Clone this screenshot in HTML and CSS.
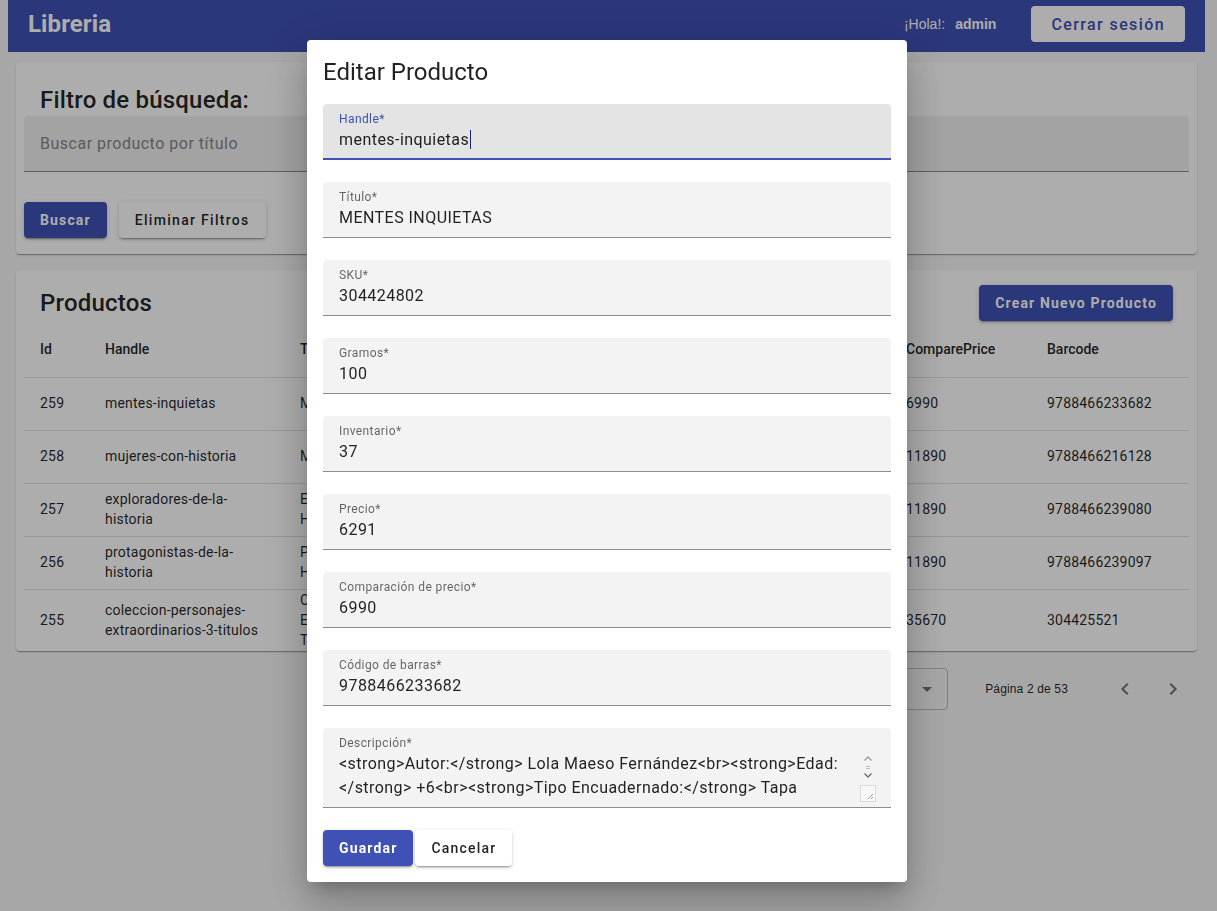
FILE: index.html
```html
<!DOCTYPE html>
<html lang="es">
<head>
<meta charset="utf-8">
<title>Libreria</title>
<link rel="stylesheet" href="styles.css">
</head>
<body>
<header class="appbar">
  <div class="brand">Libreria</div>
  <div class="user">
    <span class="hello">¡Hola!:</span>
    <span class="username">admin</span>
    <button class="btn-logout">Cerrar sesión</button>
  </div>
</header>

<main class="content">
  <section class="card filter-card">
    <h2 class="card-title">Filtro de búsqueda:</h2>
    <div class="search-field">Buscar producto por título</div>
    <div class="filter-actions">
      <button class="btn btn-primary">Buscar</button>
      <button class="btn btn-raised">Eliminar Filtros</button>
    </div>
  </section>

  <section class="card products-card">
    <div class="card-head">
      <h2 class="card-title">Productos</h2>
      <button class="btn btn-primary">Crear Nuevo Producto</button>
    </div>
    <table class="table">
      <colgroup>
        <col class="c-id"><col class="c-handle"><col class="c-title"><col class="c-sku"><col class="c-grams"><col class="c-inv"><col class="c-price"><col class="c-compare"><col class="c-barcode">
      </colgroup>
      <thead>
        <tr><th>Id</th><th>Handle</th><th>Title</th><th>SKU</th><th>Grams</th><th>Inventory</th><th>Price</th><th>ComparePrice</th><th>Barcode</th></tr>
      </thead>
      <tbody>
        <tr><td>259</td><td>mentes-inquietas</td><td>MENTES INQUIETAS</td><td>304424802</td><td>100</td><td>37</td><td>6291</td><td>6990</td><td>9788466233682</td></tr>
        <tr><td>258</td><td>mujeres-con-historia</td><td>MUJERES CON HISTORIA</td><td>304424801</td><td>600</td><td>12</td><td>10701</td><td>11890</td><td>9788466216128</td></tr>
        <tr><td>257</td><td>exploradores-de-la-historia</td><td>EXPLORADORES DE LA HISTORIA</td><td>304424800</td><td>600</td><td>8</td><td>10701</td><td>11890</td><td>9788466239080</td></tr>
        <tr><td>256</td><td>protagonistas-de-la-historia</td><td>PROTAGONISTAS DE LA HISTORIA</td><td>304424799</td><td>600</td><td>9</td><td>10701</td><td>11890</td><td>9788466239097</td></tr>
        <tr><td>255</td><td>coleccion-personajes-extraordinarios-3-titulos</td><td>COLECCION PERSONAJES EXTRAORDINARIOS 3 TITULOS</td><td>304425521</td><td>1800</td><td>4</td><td>32103</td><td>35670</td><td>304425521</td></tr>
      </tbody>
    </table>
  </section>

  <div class="pagination">
    <div class="rows-select">
      <span>5</span>
      <svg class="drop-icon" viewBox="0 0 24 24" width="24" height="24"><path d="M7 10l5 5 5-5z"/></svg>
    </div>
    <span class="page-info">Página 2 de 53</span>
    <button class="icon-btn" aria-label="Anterior">
      <svg viewBox="0 0 24 24" width="24" height="24"><path d="M15.41 16.59L10.83 12l4.58-4.59L14 6l-6 6 6 6 1.41-1.41z"/></svg>
    </button>
    <button class="icon-btn" aria-label="Siguiente">
      <svg viewBox="0 0 24 24" width="24" height="24"><path d="M8.59 16.59L13.17 12 8.59 7.41 10 6l6 6-6 6-1.41-1.41z"/></svg>
    </button>
  </div>
</main>

<div class="backdrop"></div>

<div class="dialog" role="dialog">
  <h2 class="dialog-title">Editar Producto</h2>
  <div class="fields">
    <div class="field focused">
      <div class="field-label">Handle*</div>
      <div class="field-value">mentes-inquietas<span class="caret"></span></div>
    </div>
    <div class="field">
      <div class="field-label">Título*</div>
      <div class="field-value">MENTES INQUIETAS</div>
    </div>
    <div class="field">
      <div class="field-label">SKU*</div>
      <div class="field-value">304424802</div>
    </div>
    <div class="field">
      <div class="field-label">Gramos*</div>
      <div class="field-value">100</div>
    </div>
    <div class="field">
      <div class="field-label">Inventario*</div>
      <div class="field-value">37</div>
    </div>
    <div class="field">
      <div class="field-label">Precio*</div>
      <div class="field-value">6291</div>
    </div>
    <div class="field">
      <div class="field-label">Comparación de precio*</div>
      <div class="field-value">6990</div>
    </div>
    <div class="field">
      <div class="field-label">Código de barras*</div>
      <div class="field-value">9788466233682</div>
    </div>
    <div class="field field-textarea">
      <div class="field-label">Descripción*</div>
      <div class="textarea-body">
        <div class="textarea-text">&lt;strong&gt;Autor:&lt;/strong&gt; Lola Maeso Fernández&lt;br&gt;&lt;strong&gt;Edad:&lt;/strong&gt; +6&lt;br&gt;&lt;strong&gt;Tipo Encuadernado:&lt;/strong&gt; Tapa blanda&lt;br&gt;&lt;strong&gt;Número de páginas:&lt;/strong&gt; 32</div>
        <svg class="textarea-scroll" viewBox="0 0 16 50" width="16" height="50">
          <path d="M4.5 8.5 L8 5 L11.5 8.5" fill="none" stroke="#9a9a9a" stroke-width="1.3"/>
          <path d="M6 14.5 H10 M6 16.5 H10" stroke="#bdbdbd" stroke-width="1"/>
          <path d="M4.5 21.5 L8 25 L11.5 21.5" fill="none" stroke="#6a6a6a" stroke-width="1.3"/>
          <rect x="0.5" y="33.5" width="15" height="16" fill="#f7f7f7" stroke="#dadada"/>
          <path d="M8 47 L13 42 M11 47 L13 45" stroke="#8a8a8a" stroke-width="0.8"/>
        </svg>
      </div>
    </div>
  </div>
  <div class="dialog-actions">
    <button class="btn btn-save">Guardar</button>
    <button class="btn btn-cancel">Cancelar</button>
  </div>
</div>
</body>
</html>
```

FILE: styles.css
```css
* {
  box-sizing: border-box;
}

body {
  margin: 0 12px 0 8px;
  font-family: Roboto, "Noto Sans", sans-serif;
  background: #f7f7f7;
  color: rgba(0, 0, 0, 0.87);
  min-height: 911px;
}

button {
  font-family: Roboto, "Noto Sans", sans-serif;
  cursor: pointer;
}

/* App bar */
.appbar {
  height: 52px;
  padding: 0 20px 4px;
  display: flex;
  align-items: center;
  justify-content: space-between;
  background: #3f51b5;
  color: #fff;
}

.brand {
  font-size: 24px;
  font-weight: 700;
  line-height: 28px;
  letter-spacing: 0.1px;
}

.user {
  display: flex;
  align-items: center;
}

.hello {
  font-family: "Liberation Sans", Arial, sans-serif;
  font-size: 14px;
}

.username {
  font-family: "Liberation Sans", Arial, sans-serif;
  font-size: 14px;
  font-weight: 700;
  margin: 0 35px 0 10px;
}

.btn-logout {
  height: 36px;
  padding: 0 20px;
  border: 0;
  border-radius: 4px;
  background: #fff;
  color: #3f51b5;
  font-size: 16px;
  font-weight: 500;
  letter-spacing: 1.4px;
}

/* Content */
.content {
  padding: 10px 8px 0;
}

.card {
  background: #fff;
  border-radius: 4px;
  box-shadow: 0 2px 1px -1px rgba(0, 0, 0, 0.2), 0 1px 1px 0 rgba(0, 0, 0, 0.14), 0 1px 3px 0 rgba(0, 0, 0, 0.12);
}

.card-title {
  margin: 0;
  font-size: 24px;
  font-weight: 500;
  line-height: 32px;
  letter-spacing: 0.2px;
  color: rgba(0, 0, 0, 0.87);
}

.filter-card {
  padding: 8px 8px 16px;
}

.filter-card .card-title {
  padding: 14px 16px 0;
}

.search-field {
  height: 56px;
  padding: 0 16px;
  display: flex;
  align-items: center;
  background: rgba(0, 0, 0, 0.06);
  border-bottom: 1px solid rgba(0, 0, 0, 0.42);
  border-radius: 4px 4px 0 0;
  font-size: 16px;
  letter-spacing: 0.5px;
  color: #868686;
}

.filter-actions {
  display: flex;
  gap: 12px;
  margin-top: 30px;
}

.btn {
  height: 36px;
  padding: 0 16px;
  border: 0;
  border-radius: 4px;
  font-size: 14px;
  font-weight: 500;
  letter-spacing: 1.3px;
}

.btn-primary {
  background: #3f51b5;
  color: #fff;
  font-weight: 700;
  letter-spacing: 1.15px;
  box-shadow: 0 3px 1px -2px rgba(0, 0, 0, 0.2), 0 2px 2px 0 rgba(0, 0, 0, 0.14), 0 1px 5px 0 rgba(0, 0, 0, 0.12);
}

.btn-raised {
  background: #fff;
  color: rgba(0, 0, 0, 0.87);
  box-shadow: 0 3px 1px -2px rgba(0, 0, 0, 0.2), 0 2px 2px 0 rgba(0, 0, 0, 0.14), 0 1px 5px 0 rgba(0, 0, 0, 0.12);
}

/* Products */
.products-card {
  margin-top: 16px;
  padding: 0 8px;
}

.card-head {
  display: flex;
  align-items: center;
  justify-content: space-between;
  padding: 15px 16px 0;
}

.table {
  width: 100%;
  border-collapse: collapse;
  table-layout: fixed;
  font-size: 14px;
  line-height: 20px;
  letter-spacing: 0.2px;
}

.c-id { width: 65px; }
.c-handle { width: 195px; }
.c-title { width: 212px; }
.c-sku { width: 120px; }
.c-grams { width: 90px; }
.c-inv { width: 100px; }
.c-price { width: 84px; }
.c-compare { width: 141px; }
.c-barcode { width: 158px; }

.table th {
  height: 56px;
  padding: 0 16px;
  text-align: left;
  font-weight: 500;
  letter-spacing: 0;
  border-bottom: 1px solid #e0e0e0;
  vertical-align: middle;
}

.table td {
  height: 53px;
  padding: 0 16px 1px;
  border-bottom: 1px solid #e0e0e0;
  vertical-align: middle;
}

.table tbody tr:last-child td {
  border-bottom: 0;
}

/* Pagination */
.pagination {
  display: flex;
  align-items: center;
  justify-content: flex-end;
  margin-top: 14px;
}

.rows-select {
  width: 110px;
  height: 42px;
  display: flex;
  align-items: center;
  justify-content: space-between;
  padding: 0 8px 0 14px;
  border: 1px solid rgba(0, 0, 0, 0.23);
  border-radius: 4px;
  font-size: 14px;
}

.drop-icon {
  fill: rgba(0, 0, 0, 0.54);
}

.page-info {
  margin: 0 33px 0 37px;
  font-family: "Liberation Sans", Arial, sans-serif;
  font-size: 12px;
  letter-spacing: 0.15px;
  color: rgba(0, 0, 0, 0.87);
}

.icon-btn {
  width: 48px;
  height: 48px;
  padding: 12px;
  border: 0;
  border-radius: 50%;
  background: transparent;
  fill: rgba(0, 0, 0, 0.54);
}

/* Backdrop & dialog */
.backdrop {
  position: fixed;
  inset: 0;
  background: rgba(0, 0, 0, 0.32);
}

.dialog {
  position: fixed;
  top: 40px;
  left: 307px;
  width: 600px;
  padding: 16px;
  background: #fff;
  border-radius: 4px;
  box-shadow: 0 11px 15px -7px rgba(0, 0, 0, 0.2), 0 24px 38px 3px rgba(0, 0, 0, 0.14), 0 9px 46px 8px rgba(0, 0, 0, 0.12);
}

.dialog-title {
  margin: 0 0 16px;
  font-size: 24px;
  font-weight: 400;
  line-height: 32px;
  color: rgba(0, 0, 0, 0.87);
}

.fields {
  display: flex;
  flex-direction: column;
  gap: 22px;
}

.field {
  height: 56px;
  padding: 8px 16px 9px;
  background: #f3f3f3;
  border-bottom: 1px solid rgba(0, 0, 0, 0.42);
  border-radius: 4px 4px 0 0;
}

.field.focused {
  background: #e4e4e4;
  border-bottom: 2px solid #3f51b5;
}

.field-label {
  font-size: 12px;
  line-height: 14px;
  letter-spacing: 0.4px;
  color: rgba(0, 0, 0, 0.6);
}

.field.focused .field-label {
  color: #3f51b5;
}

.field-value {
  margin-top: 4px;
  font-size: 16px;
  line-height: 20px;
  letter-spacing: 0.45px;
  color: rgba(0, 0, 0, 0.87);
}

.caret {
  display: inline-block;
  width: 1px;
  height: 19px;
  margin-left: 1px;
  vertical-align: -4px;
  background: #1a237e;
}

.field-textarea {
  height: 80px;
  padding-right: 15px;
  padding-bottom: 7px;
}

.textarea-body {
  display: flex;
  margin-top: 2px;
}

.textarea-text {
  flex: 1;
  height: 48px;
  overflow: hidden;
  font-size: 16px;
  line-height: 24px;
  letter-spacing: 0.45px;
  color: rgba(0, 0, 0, 0.87);
}

.textarea-scroll {
  flex: none;
  overflow: visible;
}

.dialog-actions {
  display: flex;
  gap: 2px;
  margin-top: 22px;
}

.btn-save {
  background: #3f51b5;
  color: #fff;
  font-weight: 700;
  letter-spacing: 1.15px;
  box-shadow: 0 3px 1px -2px rgba(0, 0, 0, 0.2), 0 2px 2px 0 rgba(0, 0, 0, 0.14), 0 1px 5px 0 rgba(0, 0, 0, 0.12);
}

.btn-cancel {
  background: #fff;
  color: rgba(0, 0, 0, 0.87);
  letter-spacing: 1.2px;
  box-shadow: 0 3px 1px -2px rgba(0, 0, 0, 0.2), 0 2px 2px 0 rgba(0, 0, 0, 0.14), 0 1px 5px 0 rgba(0, 0, 0, 0.12);
}
```
